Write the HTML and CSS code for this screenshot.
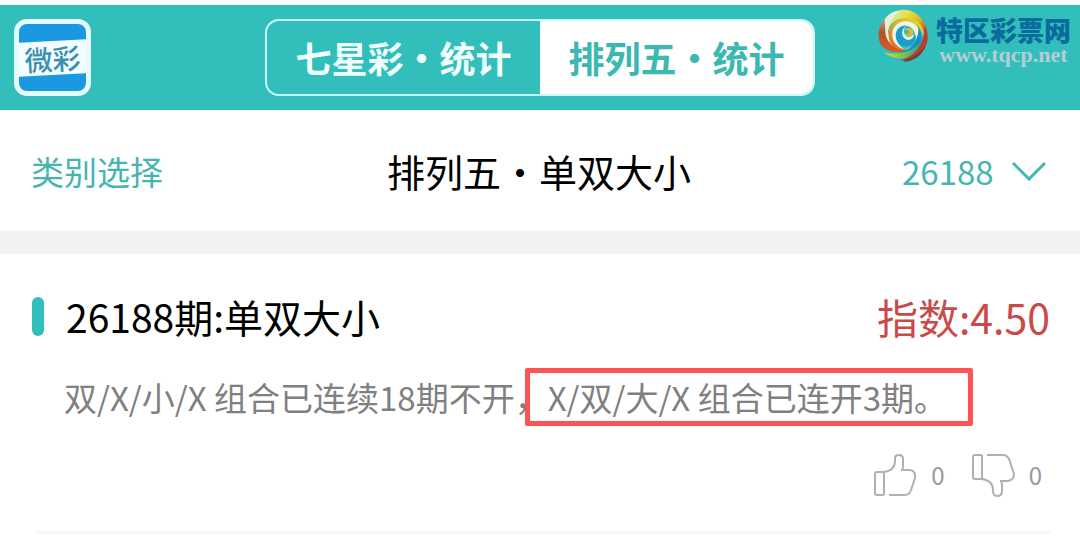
FILE: index.html
```
<!DOCTYPE html>
<html lang="zh-CN">
<head>
<meta charset="UTF-8" />
<meta name="viewport" content="width=device-width, initial-scale=1" />
<title>排列五·统计</title>
<link rel="stylesheet" href="styles.css">
</head>
<body>

  <header class="topbar">
    <a href="#" class="app-logo" aria-label="微彩">
      <span class="app-logo-band">微彩</span>
    </a>

    <nav class="tabs">
      <button type="button" class="tab">七星彩・统计</button>
      <button type="button" class="tab active">排列五・统计</button>
    </nav>

    <a href="#" class="site-logo">
      <svg class="swirl" viewBox="10 10 154 158" aria-hidden="true">
        <defs>
          <linearGradient id="topGrad" x1="0" y1="0" x2="1" y2="0.6">
            <stop offset="0" stop-color="#dcefdc" />
            <stop offset="0.45" stop-color="#e6e04a" />
            <stop offset="0.75" stop-color="#d9b42a" />
            <stop offset="1" stop-color="#b8502c" />
          </linearGradient>
          <linearGradient id="redGrad" x1="0" y1="0" x2="0" y2="1">
            <stop offset="0" stop-color="#c9a080" />
            <stop offset="0.4" stop-color="#b0522e" />
            <stop offset="1" stop-color="#dd5a24" />
          </linearGradient>
          <linearGradient id="goldGrad" x1="0" y1="1" x2="1" y2="0">
            <stop offset="0" stop-color="#d4602c" />
            <stop offset="0.5" stop-color="#e2b020" />
            <stop offset="1" stop-color="#e6dc28" />
          </linearGradient>
          <linearGradient id="greenGrad" x1="0" y1="0" x2="1" y2="0">
            <stop offset="0" stop-color="#e0dc3c" />
            <stop offset="0.4" stop-color="#8cc83c" />
            <stop offset="1" stop-color="#1496c4" />
          </linearGradient>
        </defs>
        <path fill="url(#topGrad)" d="M30 42C52 10 96 2 126 24C152 42 164 72 158 104C152 76 132 44 96 38C72 34 50 48 40 72Z" />
        <path fill="url(#redGrad)" d="M31 38C10 60 6 96 20 118C36 140 74 146 106 132C70 134 44 106 46 78C36 70 30 56 31 38Z" />
        <path fill="#e2f0dc" d="M31 40C40 24 58 14 78 14C60 26 46 44 42 66C38 90 50 112 72 128C48 120 32 100 32 78C32 64 30 52 31 40Z" />
        <path fill="url(#goldGrad)" d="M42 88C42 54 72 32 108 38C138 44 154 72 148 100C144 72 124 50 98 48C70 48 54 70 60 98C64 116 78 128 92 134C62 132 42 114 42 88Z" />
        <path fill="#eef8ea" d="M53 84C54 58 80 40 106 48C130 54 142 78 134 100C128 120 112 132 90 132C112 126 126 110 124 90C120 66 100 54 82 60C66 66 60 84 66 102C70 116 80 126 92 132C68 126 52 108 53 84Z" />
        <path fill="#158fc4" d="M132 62C146 82 144 112 122 130C108 140 90 142 72 140C108 134 134 106 132 62Z" />
        <path fill="url(#greenGrad)" d="M28 140C66 150 112 142 138 108C148 94 150 82 148 70C160 98 146 132 120 148C90 164 54 160 28 140Z" />
        <path fill="#c23a2c" d="M152 66C168 96 158 130 132 148C114 162 94 166 72 164C118 156 148 120 152 66Z" />
        <path fill="#6a3e38" d="M90 163C118 156 140 140 154 120C144 148 120 166 90 168Z" />
        <path fill="#189dcc" d="M92 60C70 62 60 80 65 98C70 118 90 126 108 119C122 112 128 96 120 82C118 94 108 100 98 98C84 96 80 78 92 60Z" />
        <path fill="#e9f6df" d="M92 62C78 74 80 96 98 102C110 104 120 94 120 82C114 92 104 96 96 92C88 86 86 74 92 62Z" />
        <path fill="#e6b62c" d="M88 74C94 64 110 64 116 74C120 86 110 94 100 92C94 90 92 86 93 82C98 88 106 84 104 78C102 72 94 70 88 74Z" />
      </svg>
      <span class="site-text">
        <span class="site-name">特区彩票网</span>
        <span class="site-url">www.tqcp.net</span>
      </span>
    </a>
  </header>

  <section class="filter">
    <button type="button" class="category">类别选择</button>
    <h1>排列五・单双大小</h1>
    <div class="issue">
      <select id="issueSelect" aria-label="期号">
        <option>26188</option>
      </select>
      <svg class="chevron" viewBox="0 0 36 20" aria-hidden="true">
        <path d="M2 2L18 18L34 2" />
      </svg>
    </div>
  </section>

  <main>
    <article class="entry">
      <div class="entry-head">
        <h2>26188期:单双大小</h2>
        <span class="score">指数:4.50</span>
      </div>
      <p class="entry-text">双/X/小/X 组合已连续18期不开，<span class="marked">X/双/大/X 组合已连开3期。</span></p>
      <div class="votes">
        <button type="button" class="vote" aria-label="赞 0">
          <svg viewBox="0 0 44 44" aria-hidden="true">
            <path d="M11 19V42M4 19H11M11 42H4Q2 42 2 40V21Q2 19 4 19M11 19C18 18 22 14 22 8V5Q22 2 26 2Q30 2 30 6V12Q30 17 28 17H37Q43 18 42 25L38 37Q36 42 32 42H16" />
          </svg>
          <span>0</span>
        </button>
        <button type="button" class="vote" aria-label="踩 0">
          <svg viewBox="0 0 44 44" aria-hidden="true">
            <path d="M11 26V2M4 26H11M11 2H4Q2 2 2 4V24Q2 26 4 26M11 26C18 27 22 31 22 37V39Q23 43 26 43Q31 43 31 38V32Q31 28 29 28H37Q43 27 43 21L38 6Q36 2 32 2H16" />
          </svg>
          <span>0</span>
        </button>
      </div>
    </article>
    <hr class="divider" />
  </main>

</body>
</html>
```
FILE: styles.css
```
* {
  box-sizing: border-box;
}

body {
  margin: 0;
  background: #fff;
  color: #000;
  font-family: 'Noto Sans CJK SC', sans-serif;
}

button,
select {
  border: none;
  background: none;
  padding: 0;
  font-family: inherit;
  cursor: pointer;
}

a {
  text-decoration: none;
}

h1, h2, p {
  margin: 0;
  font-weight: normal;
}

/* header */
.topbar {
  display: grid;
  grid-template-columns: 1fr 550px 1fr;
  align-items: start;
  margin-top: 5px;
  padding: 14px;
  background: #32bebb;
}

.app-logo {
  display: flex;
  align-items: center;
  width: 77px;
  height: 77px;
  border: 5px solid #e4fcfc;
  border-radius: 13px;
  background: #1a98e0;
  overflow: hidden;
}

.app-logo-band {
  flex: 1;
  margin: 0 -4px;
  background: #f2fdff;
  color: #3a8fb0;
  font-size: 28px;
  font-weight: 500;
  line-height: 34px;
  text-align: center;
  transform: rotate(-3deg);
}

.tabs {
  display: flex;
  height: 77px;
  border: 2px solid #c8fafa;
  border-radius: 14px;
  overflow: hidden;
}

.tab {
  flex: 1;
  padding-bottom: 2px;
  color: #effffe;
  font-size: 36px;
  font-weight: bold;
}

.tab.active {
  background: #fff;
  color: #3cb8b2;
}

.site-logo {
  display: flex;
  justify-content: flex-end;
  gap: 7px;
  margin-top: -10px;
  margin-right: -5px;
}

.swirl {
  width: 51px;
  height: 53px;
}

.site-text {
  display: flex;
  flex-direction: column;
  align-items: center;
  padding-top: 6px;
}

.site-name {
  color: #0a6c9c;
  font-size: 27px;
  font-weight: 900;
  line-height: 30px;
}

.site-url {
  color: #b4cfd4;
  font-family: 'Liberation Serif', serif;
  font-size: 22px;
  font-weight: bold;
  line-height: 20px;
}

/* category / issue row */
.filter {
  display: grid;
  grid-template-columns: 1fr auto 1fr;
  align-items: center;
  height: 121px;
  padding: 0 33px 0 31px;
}

.category {
  justify-self: start;
  color: #45b5b0;
  font-size: 33px;
}

.filter h1 {
  font-size: 38px;
}

.issue {
  display: flex;
  justify-self: end;
  align-items: center;
  gap: 17px;
}

.issue select {
  appearance: none;
  color: #45b5b0;
  font-size: 33px;
}

.chevron {
  width: 36px;
  height: 20px;
  fill: none;
  stroke: #45b5b0;
  stroke-width: 3;
}

/* list */
main {
  border-top: 23px solid #f2f2f2;
}

.entry {
  padding: 32px 30px 34px 32px;
}

.entry-head {
  display: flex;
  justify-content: space-between;
  align-items: center;
  line-height: 60px;
}

.entry-head h2 {
  display: flex;
  align-items: center;
  gap: 22px;
  font-size: 39px;
}

.entry-head h2::before {
  content: "";
  width: 12px;
  height: 39px;
  border-radius: 6px;
  background: #32bebb;
}

.score {
  color: #c94a48;
  font-size: 41px;
}

.entry-text {
  padding: 25px 0 0 32px;
  color: #808080;
  font-size: 33px;
  line-height: 52px;
}

.marked {
  position: relative;
}

.marked::after {
  content: "";
  position: absolute;
  top: -5px;
  right: -26px;
  bottom: -5px;
  left: -23px;
  border: 5px solid #ff5252;
  border-radius: 2px;
}

.votes {
  display: flex;
  justify-content: flex-end;
  gap: 26px;
  padding: 30px 8px 0 0;
}

.vote {
  display: flex;
  align-items: center;
  gap: 14px;
  color: #999;
  font-size: 24px;
  line-height: 44px;
}

.vote svg {
  width: 44px;
  height: 44px;
  fill: none;
  stroke: #b0b0b0;
  stroke-width: 2;
}

.divider {
  height: 3px;
  margin: 0 30px 0 37px;
  border: none;
  background: #f8f8f8;
}
```
